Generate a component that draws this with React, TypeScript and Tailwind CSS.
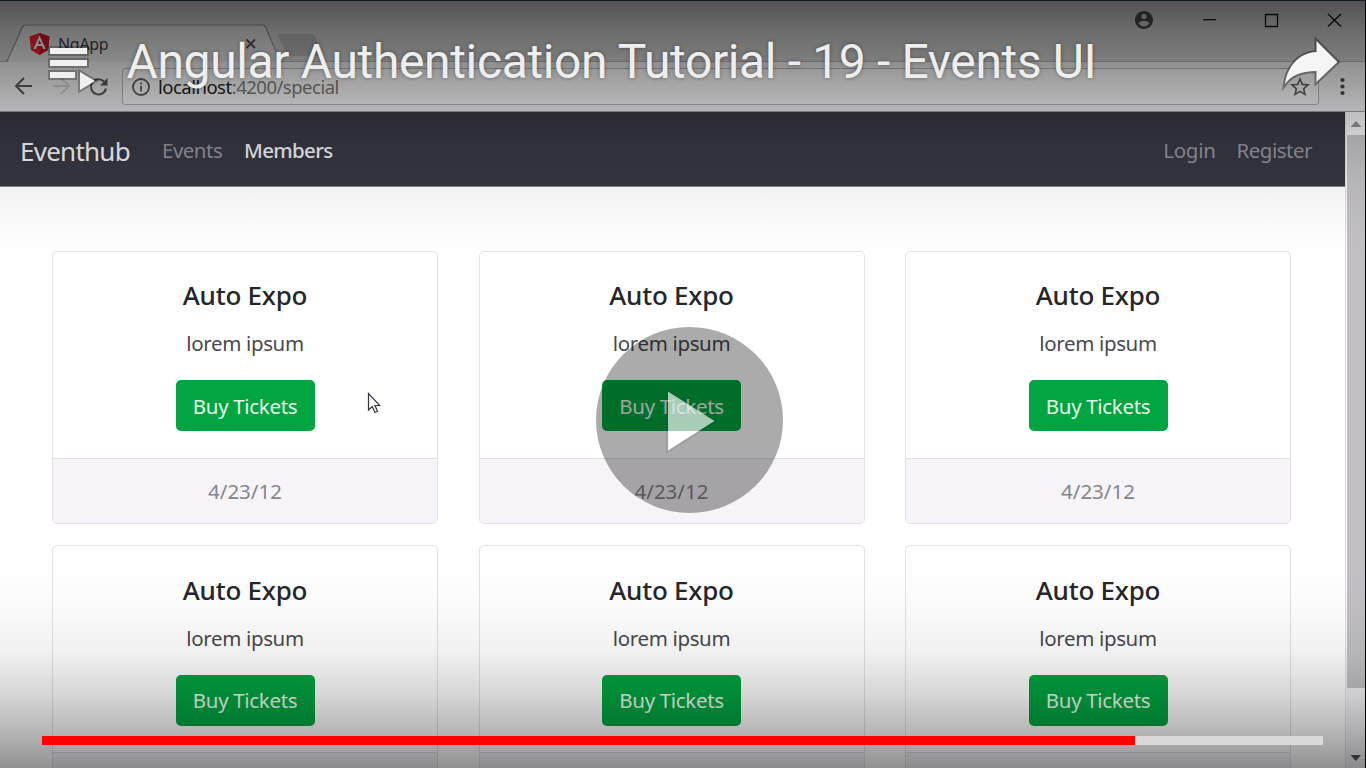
import React from "react";

const events = [
  { name: "Auto Expo", description: "lorem ipsum", date: "4/23/12" },
  { name: "Auto Expo", description: "lorem ipsum", date: "4/23/12" },
  { name: "Auto Expo", description: "lorem ipsum", date: "4/23/12" },
  { name: "Auto Expo", description: "lorem ipsum" },
  { name: "Auto Expo", description: "lorem ipsum" },
  { name: "Auto Expo", description: "lorem ipsum" },
];

function TitleBar() {
  return (
    <div className="relative flex h-[62px] shrink-0 items-start bg-[#cbcbcb]">
      <svg className="absolute inset-0" width="1366" height="62" fill="none">
        <path d="M278 34H311Q314 34 315.500 37L322 53Q323 56 320 56H290Q287 56 286 53L278 36Z" fill="#b3b3b3" />
        <path d="M0 62H5Q7 62 8 59L22 28Q23 25 26 25H262Q265 25 266 28L279 59Q280 62 283 62Z" fill="#dcdcdc" />
        <path d="M0 62H5Q7 62 8 59L22 28Q23 25 26 25H262Q265 25 266 28L279 59Q280 62 283 62H1366" stroke="#8f8f8f" strokeWidth="1.200" />
      </svg>
      <div className="relative mt-[33px] ml-[29px] flex w-[229px] items-center">
        <svg width="21" height="22" viewBox="0 0 21 22">
          <path d="M10.500 0 20.500 3.500 19 17 10.500 22 2 17 .5 3.500Z" fill="#ee2030" />
          <path d="M10.500 0 20.500 3.500 19 17 10.500 22Z" fill="#c8142a" />
          <path d="M10.500 2.500 4.300 16H6.700L8 13H13L14.300 16H16.700ZM10.500 7 12.100 11H8.900Z" fill="#f5f5f5" fillRule="evenodd" />
        </svg>
        <span className="ml-2 text-[16px] leading-[22px] tracking-[-0.3px] text-[#3b3b45]">NgApp</span>
        <svg className="ml-auto" width="14" height="14" stroke="#505050" strokeWidth="1.800">
          <path d="M2.500 2.500 11 11M11 2.500 2.500 11" />
        </svg>
      </div>
      <div className="relative mt-[10px] mr-[24px] ml-auto flex items-center">
        <svg width="18" height="18" viewBox="2 2 20 20" fill="#474747">
          <path d="M12 2C6.480 2 2 6.480 2 12s4.480 10 10 10 10-4.480 10-10S17.520 2 12 2zm0 3c1.660 0 3 1.340 3 3s-1.340 3-3 3-3-1.340-3-3 1.340-3 3-3zm0 14.200c-2.500 0-4.710-1.280-6-3.220.03-1.990 4-3.080 6-3.080 1.990 0 5.970 1.090 6 3.080-1.290 1.940-3.500 3.220-6 3.220z" />
        </svg>
        <svg className="ml-[50px]" width="14" height="19" stroke="#151515" strokeWidth="1.300"><path d="M0 9.700H13" /></svg>
        <svg className="ml-[47px]" width="15" height="19" fill="none" stroke="#151515" strokeWidth="1.300"><path d="M1.500 4.500H13.500V16.500H1.500Z" /></svg>
        <svg className="ml-[48px]" width="15" height="19" stroke="#151515" strokeWidth="1.400"><path d="M1 4 14 16.500M14 4 1 16.500" /></svg>
      </div>
    </div>
  );
}

function Toolbar() {
  return (
    <div className="flex h-[50px] shrink-0 items-start border-b border-[#9c9ca0] bg-[#e9e8ea]">
      <svg className="mt-[14px] ml-[14px]" width="95" height="22" fill="none" strokeWidth="2">
        <path d="M18 10H2M10 2 2 10 10 18" stroke="#555" />
        <path d="M39 10H54M47 2 55 10 47 18" stroke="#c9c9cb" />
        <path d="M90 5.500A7.600 7.600 0 1 0 92 12.500" stroke="#555" />
        <path d="M93.500 2V9.500H86Z" fill="#555" />
      </svg>
      <div className="mt-[6px] ml-[13px] flex h-[37px] w-[1197px] items-center rounded-[3px] border-[1.5px] border-[#b0b0b4] bg-[#efefef]">
        <svg className="ml-[8px]" width="20" height="20" viewBox="0 0 20 20" fill="none" stroke="#5a5a5a" strokeWidth="1.800">
          <circle cx="10" cy="10" r="8" />
          <path d="M10 9V14.500M10 5.500V7.500" />
        </svg>
        <span className="ml-[7px] text-[18.5px] leading-[30px] tracking-[-0.5px] whitespace-nowrap text-[#777]">
          <span className="text-[#222]">localhost</span>:4200/special
        </span>
        <svg className="mr-[8px] ml-auto" width="20" height="20" viewBox="2 2 20 20" fill="#5a5a5a">
          <path d="M22 9.240l-7.190-.62L12 2 9.190 8.630 2 9.240l5.460 4.730L5.820 21 12 17.270 18.180 21l-1.630-7.030L22 9.240zM12 15.400l-3.760 2.270 1-4.280-3.320-2.880 4.380-.38L12 6.100l1.710 4.040 4.380.38-3.320 2.880 1 4.280L12 15.400z" />
        </svg>
      </div>
      <svg className="mt-[15px] ml-[20px]" width="8" height="20" fill="#484848">
        <circle cx="3.500" cy="3" r="2.100" />
        <circle cx="3.500" cy="9.500" r="2.100" />
        <circle cx="3.500" cy="16" r="2.100" />
      </svg>
    </div>
  );
}

function Navbar() {
  return (
    <nav className="flex h-[75px] items-center border-b border-[#85858c] bg-[linear-gradient(#39353e,#363742_40%,#363742)] pt-[4px] pr-[33px] pb-[1px] pl-[20px] text-[20.5px]">
      <span className="w-[142px] pt-[1px] text-[26px] tracking-[-0.75px] text-[#f3f3f5]">Eventhub</span>
      <span className="w-[82px] tracking-[-0.5px] text-[#93939c]">Events</span>
      <span className="font-medium tracking-[-0.65px] text-[#eeeef3]">Members</span>
      <span className="ml-auto tracking-[-0.3px] text-[#93939c]">Login</span>
      <span className="ml-[21px] tracking-[-0.5px] text-[#93939c]">Register</span>
    </nav>
  );
}

type Event = { name: string; description: string; date?: string };

function EventCard({ event }: { event: Event }) {
  return (
    <article className="flex h-[273px] flex-col overflow-hidden rounded-[5px] border border-[#e4e0e7] bg-white text-center text-[20.5px]">
      <div className="flex h-[206px] shrink-0 flex-col items-center pt-[27.3px]">
        <h2 className="text-[26px] leading-[32px] font-medium tracking-[-0.25px] text-[#25252c]">{event.name}</h2>
        <p className="mt-[16.2px] leading-[32px] tracking-[-0.35px] text-[#48484f]">{event.description}</p>
        <button className="mt-[21px] h-[51px] w-[139px] shrink-0 rounded-[5px] bg-[#00a441] pt-[1px] tracking-[-0.33px] whitespace-nowrap text-[#e6fbe9]">
          Buy Tickets
        </button>
      </div>
      <footer className="flex flex-1 items-center justify-center border-t border-[#dfdde2] bg-[#f6f4f8] pt-[1px] text-[#85848d]">
        {event.date}
      </footer>
    </article>
  );
}

function Scrollbar() {
  return (
    <div className="flex w-[20px] flex-col items-center border-l border-[#e3e0e7] bg-[#f4f3f6]">
      <svg className="mt-[9px]" width="12" height="7"><path d="M6 0 11.500 6H.5Z" fill="#929296" /></svg>
      <div className="mt-[7px] ml-[1px] h-[553px] w-[18px] bg-[#c2c0c4]" />
      <svg className="mt-auto mb-[6px]" width="12" height="7"><path d="M.5 0H11L5.800 6Z" fill="#525258" /></svg>
    </div>
  );
}

function PlayerOverlay() {
  return (
    <div className="absolute inset-0">
      <div className="absolute inset-x-0 top-0 h-[260px] bg-[linear-gradient(to_bottom,rgba(0,0,0,0.6)_0px,rgba(0,0,0,0.47)_30px,rgba(0,0,0,0.37)_65px,rgba(0,0,0,0.24)_105px,rgba(0,0,0,0.13)_145px,rgba(0,0,0,0.05)_187px,rgba(0,0,0,0.015)_230px,rgba(0,0,0,0)_260px)]" />
      <div className="absolute inset-x-0 bottom-0 h-[208px] bg-[linear-gradient(to_bottom,rgba(0,0,0,0)_0px,rgba(0,0,0,0.015)_40px,rgba(0,0,0,0.055)_90px,rgba(0,0,0,0.16)_135px,rgba(0,0,0,0.29)_172px,rgba(0,0,0,0.43)_208px)]" />
      <svg className="absolute top-[45px] left-[46px]" width="54" height="50" fill="#f0f0f0">
        <path d="M4 3H41V9H4ZM4 15H41V21H4ZM4 27H29V33H4ZM34 27V45L49 36Z" fill="none" stroke="#000" strokeOpacity=".25" strokeWidth="4" />
        <path d="M4 3H41V9H4ZM4 15H41V21H4ZM4 27H29V33H4ZM34 27V45L49 36Z" />
      </svg>
      <h1 className="absolute top-[34px] left-[126.500px] font-[Roboto,sans-serif] text-[48px] leading-[56px] tracking-[-0.36px] whitespace-nowrap text-[#eee] [text-shadow:0_0_4px_rgba(0,0,0,0.4)]">
        Angular Authentication Tutorial - 19 - Events UI
      </h1>
      <svg className="absolute top-[35px] left-[1280px]" width="62" height="56">
        <path d="M36.500 6 57.500 27 36.500 47V36C20 36 11 41 5 49C7 34 17 18 36.500 17Z" fill="none" stroke="#000" strokeOpacity=".35" strokeWidth="4" />
        <path d="M36.500 6 57.500 27 36.500 47V36C20 36 11 41 5 49C7 34 17 18 36.500 17Z" fill="#f5f5f5" />
      </svg>
      <svg className="absolute top-[326px] left-[595px]" width="189" height="188">
        <ellipse cx="94.500" cy="94" rx="93.500" ry="93" fill="#000" fillOpacity=".33" />
        <path d="M71 62 123 95 71 128ZM73 65.500V124.500L119.500 95Z" fill="#000" fillOpacity=".08" fillRule="evenodd" />
        <path d="M73 65.500 119.500 95 103.700 105H73Z" fill="#fff" fillOpacity=".66" />
        <path d="M73 105H103.700L73 124.500Z" fill="#fff" />
      </svg>
      <div className="absolute top-[736px] left-[42px] flex h-[9px] w-[1281px] bg-[#dadada]">
        <div className="h-full w-[1093px] bg-[#f00]" />
      </div>
    </div>
  );
}

export default function App() {
  return (
    <div className="relative flex h-[768px] w-[1366px] flex-col overflow-hidden bg-white font-['Noto_Sans',sans-serif]">
      <TitleBar />
      <Toolbar />
      <div className="flex h-[656px]">
        <main className="w-[1345px] overflow-hidden bg-white">
          <Navbar />
          <div className="grid grid-cols-[386px_386px_386px] gap-x-[40.5px] gap-y-[21.4px] pt-[63.9px] pl-[52px]">
            {events.map((event, index) => (
              <EventCard key={index} event={event} />
            ))}
          </div>
        </main>
        <Scrollbar />
        <div className="w-px bg-black" />
      </div>
      <div className="absolute top-0 right-0 h-[112px] w-px bg-black" />
      <div className="absolute inset-x-0 top-0 h-px bg-[#30465a]" />
      <svg className="absolute top-[392px] left-[367px]" width="14" height="22" fill="#fff" stroke="#35343d" strokeWidth="1.200">
        <path d="M1.500 1.500V18L5.200 14.500 8 20.500 10.500 19.300 8 13.500H12.800Z" />
      </svg>
      <PlayerOverlay />
    </div>
  );
}
